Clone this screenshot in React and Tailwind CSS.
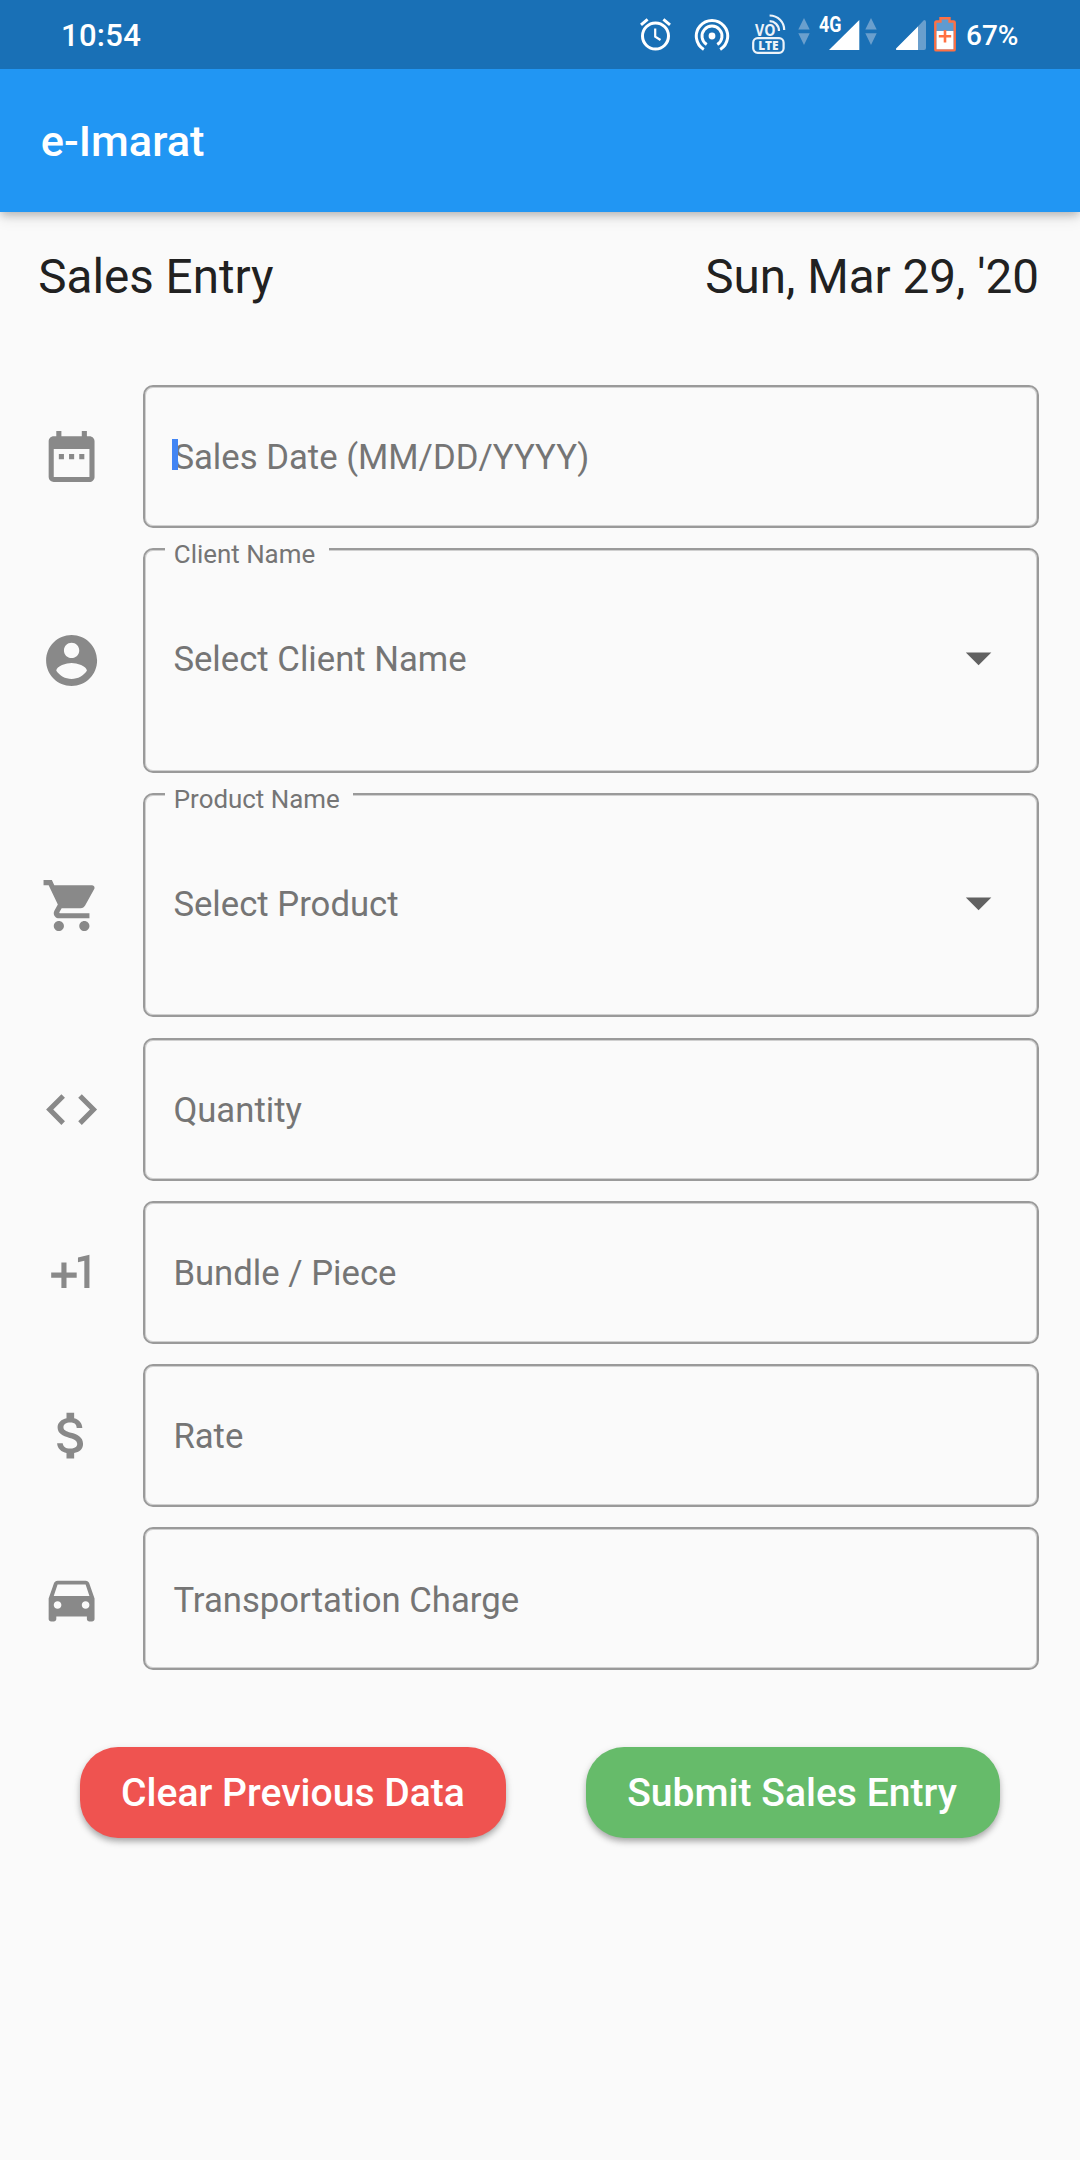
const ICONS = {
  date: "M9 11H7v2h2v-2zm4 0h-2v2h2v-2zm4 0h-2v2h2v-2zm2-7h-1V2h-2v2H8V2H6v2H5c-1.11 0-1.99.9-1.99 2L3 20a2 2 0 0 0 2 2h14c1.1 0 2-.9 2-2V6c0-1.1-.9-2-2-2zm0 16H5V9h14v11z",
  account: "M12 2C6.48 2 2 6.48 2 12s4.48 10 10 10 10-4.48 10-10S17.52 2 12 2zm0 3c1.66 0 3 1.34 3 3s-1.34 3-3 3-3-1.34-3-3 1.34-3 3-3zm0 14.2c-2.5 0-4.71-1.28-6-3.22.03-1.99 4-3.08 6-3.08 1.99 0 5.97 1.09 6 3.08-1.29 1.94-3.5 3.22-6 3.22z",
  cart: "M7 18c-1.1 0-1.99.9-1.99 2S5.9 22 7 22s2-.9 2-2-.9-2-2-2zM1 2v2h2l3.6 7.59-1.35 2.45c-.16.28-.25.61-.25.96 0 1.1.9 2 2 2h12v-2H7.42c-.14 0-.25-.11-.25-.25l.03-.12.9-1.63h7.45c.75 0 1.41-.41 1.75-1.03l3.58-6.49c.08-.14.12-.31.12-.48 0-.55-.45-1-1-1H5.21l-.94-2H1zm16 16c-1.1 0-1.99.9-1.99 2s.89 2 1.99 2 2-.9 2-2-.9-2-2-2z",
  code: "M9.4 16.6L4.8 12l4.6-4.6L8 6l-6 6 6 6 1.4-1.4zm5.2 0l4.6-4.6-4.6-4.6L16 6l6 6-6 6-1.4-1.4z",
  plusOne: "M10 8H8v4H4v2h4v4h2v-4h4v-2h-4zm4.5-1.92V7.9l2.5-.5V18h2V5z",
  money: "M11.8 10.9c-2.27-.59-3-1.2-3-2.15 0-1.09 1.01-1.85 2.7-1.85 1.78 0 2.44.85 2.5 2.1h2.21c-.07-1.72-1.12-3.3-3.21-3.81V3h-3v2.16c-1.94.42-3.5 1.68-3.5 3.61 0 2.31 1.91 3.46 4.7 4.13 2.5.6 3 1.48 3 2.41 0 .69-.49 1.79-2.7 1.79-2.06 0-2.87-.92-2.98-2.1h-2.2c.12 2.19 1.76 3.42 3.68 3.83V21h3v-2.15c1.95-.37 3.5-1.5 3.5-3.55 0-2.84-2.43-3.81-4.7-4.4z",
  car: "M18.92 6.01C18.72 5.42 18.16 5 17.5 5h-11c-.66 0-1.21.42-1.42 1.01L3 12v8c0 .55.45 1 1 1h1c.55 0 1-.45 1-1v-1h12v1c0 .55.45 1 1 1h1c.55 0 1-.45 1-1v-8l-2.08-5.99zM6.5 16c-.83 0-1.5-.67-1.5-1.5S5.67 13 6.5 13s1.5.67 1.5 1.5S7.33 16 6.5 16zm11 0c-.83 0-1.5-.67-1.5-1.5s.67-1.5 1.5-1.5 1.5.67 1.5 1.5-.67 1.5-1.5 1.5zM5 11l1.5-4.5h11L19 11H5z",
};

const FIELDS = [
  { icon: "date", text: "Sales Date (MM/DD/YYYY)", cursor: true },
  { icon: "account", text: "Select Client Name", label: "Client Name", labelWidth: "w-[164px]" },
  { icon: "cart", text: "Select Product", label: "Product Name", labelWidth: "w-[188px]" },
  { icon: "code", text: "Quantity" },
  { icon: "plusOne", text: "Bundle / Piece" },
  { icon: "money", text: "Rate" },
  { icon: "car", text: "Transportation Charge" },
];

function Icon({ d, className }) {
  return (
    <svg viewBox="0 0 24 24" className={`h-[61.2px] w-[61.2px] shrink-0 ${className}`} fill="currentColor">
      <path d={d} />
    </svg>
  );
}

function AlarmIcon() {
  return (
    <svg viewBox="0 0 31 33" className="h-[33px] w-[31px]" fill="none" stroke="#fff">
      <circle cx="15.5" cy="18" r="13" strokeWidth="3" />
      <path d="M15.2 10.5V18.6L20.5 22" strokeWidth="2.2" />
      <path d="M1 6.8L7.6 1.4M30 6.8L23.4 1.4" strokeWidth="3" />
    </svg>
  );
}

function HotspotIcon() {
  return (
    <svg viewBox="0 0 36 33" className="h-[33px] w-9" fill="none" stroke="#fff" strokeWidth="3">
      <circle cx="18" cy="18" r="3.4" fill="#fff" stroke="none" />
      <path d="M12.7 26.6A10 10 0 1 1 23.3 26.6" />
      <path d="M9.8 31.5A15.7 15.7 0 1 1 26.2 31.5" />
    </svg>
  );
}

function VolteIcon() {
  return (
    <svg viewBox="0 0 34 40" className="h-10 w-[34px] overflow-visible" fill="none" stroke="#edf3f9">
      <text x="3" y="22" fontSize="16.8" fontFamily="'Open Sans'" fontWeight="700" fill="#edf3f9" stroke="none" textLength="20.5" lengthAdjust="spacingAndGlyphs">VO</text>
      <path d="M17.6 7.2C22.5 7.2 27 11 27 17M17.6 1.5C26 1.5 32.2 8 32.2 16" strokeWidth="2.2" />
      <rect x="1.2" y="24.2" width="30.4" height="14.6" rx="4.5" strokeWidth="2.2" />
      <text x="6.2" y="36" fontSize="12.5" fontFamily="'Open Sans'" fontWeight="800" fill="#edf3f9" stroke="none" textLength="20.3" lengthAdjust="spacingAndGlyphs">LTE</text>
    </svg>
  );
}

function DataArrows() {
  return (
    <svg viewBox="0 0 12 27" className="h-[27px] w-3" fill="#6a9fcd">
      <path d="M6 0L11.7 11.5H.3zM6 27L.3 15.3H11.7z" />
    </svg>
  );
}

function BatteryIcon() {
  return (
    <svg viewBox="0 0 22 35" className="h-[35px] w-[22px]">
      <path d="M1.3 5.5a1 1 0 0 1 1-1H6.5V1.2h9V4.5h4.2a1 1 0 0 1 1 1V32.4a1 1 0 0 1-1 1H2.3a1 1 0 0 1-1-1z" fill="#5f9bd0" stroke="#ff7043" strokeWidth="2.4" />
      <path d="M2.6 14H19.4V32.2H2.6z" fill="#fff" />
      <path d="M11 13V25.4M4.8 19.2H17.2" stroke="#ff7043" strokeWidth="2.6" />
    </svg>
  );
}

function StatusBar() {
  return (
    <div className="relative z-10 flex h-[69px] items-start bg-[#1970b6] pl-[61px] font-medium text-white">
      <span className="mt-[18px] text-[31px] leading-[36px] tracking-[0.3px]">10:54</span>
      <div className="ml-auto flex items-start pr-[61px]">
        <div className="mt-[18px]"><AlarmIcon /></div>
        <div className="mt-[18px] ml-[23px]"><HotspotIcon /></div>
        <div className="mt-[14px] ml-[22px]"><VolteIcon /></div>
        <div className="mt-[17.5px] ml-3"><DataArrows /></div>
        <svg viewBox="0 0 42 36" className="mt-[15px] ml-2 h-9 w-[42px] overflow-visible">
          <path d="M41.3 5V35H11z" fill="#fff" />
          <text x="1" y="17.2" fontSize="22" fontFamily="Roboto" fontWeight="700" fill="#fff" textLength="22.5" lengthAdjust="spacingAndGlyphs">4G</text>
        </svg>
        <div className="mt-[17.5px] ml-[5px]"><DataArrows /></div>
        <svg viewBox="0 0 30 30" className="mt-5 ml-[19px] h-[30px] w-[30px]">
          <path d="M30 2a2 2 0 0 0-2-2L0 30H28a2 2 0 0 0 2-2z" fill="#6a9fcd" />
          <path d="M22 6.4V30H1A1 1 0 0 1 .3 28.3z" fill="#fff" />
        </svg>
        <div className="mt-[16.5px] ml-2"><BatteryIcon /></div>
        <span className="mt-[19px] ml-[10px] w-[53px] text-[28px] leading-[33px] whitespace-nowrap">67%</span>
      </div>
    </div>
  );
}

function Field({ icon, text, cursor, label, labelWidth }) {
  return (
    <div className="flex items-center gap-[40.8px]">
      <Icon d={ICONS[icon]} className="text-[#898989]" />
      <div
        className={`relative flex flex-1 items-center rounded-[10px] border-2 border-[#9a9a9a] pr-7 pl-[28.6px] text-[34.7px] leading-[42px] text-[#757575] shadow-[inset_0_0_0_1px_#d0d0d0] ${label ? "h-[224.4px] pb-[5px]" : "h-[142.8px]"}`}
      >
        {label && (
          <span className={`absolute -top-[14px] left-5 bg-[#fafafa] pl-[9px] text-[25.9px] leading-[37px] whitespace-nowrap ${labelWidth}`}>
            {label}
          </span>
        )}
        <span className={label ? "pt-[3px]" : "pt-[1.6px]"}>{text}</span>
        {cursor && <span className="absolute top-[52px] left-[27px] h-[31px] w-[6px] bg-[#4285f4]" />}
        {label && <Icon d="M7 10l5 5 5-5z" className="ml-auto text-[#616161]" />}
      </div>
    </div>
  );
}

const buttonBase =
  "h-[91.8px] rounded-[38px] pt-[2px] text-[39.1px] font-medium whitespace-nowrap text-white shadow-[0_4px_6px_-1px_rgba(0,0,0,0.26),0_3px_9px_0_rgba(0,0,0,0.13)]";

export default function App() {
  return (
    <div className="flex h-[2160px] w-[1080px] flex-col bg-[#fafafa] font-['Roboto',sans-serif]">
      <StatusBar />
      <header className="relative flex h-[142.6px] shrink-0 items-center bg-[#2196f3] pt-[3.4px] pl-[40.8px] shadow-[0_4px_8px_-1px_rgba(0,0,0,0.2),0_6px_14px_0_rgba(0,0,0,0.1)]">
        <h1 className="text-[43.35px] leading-[50px] font-medium text-white">e-Imarat</h1>
      </header>
      <div className="flex h-[173.45px] shrink-0 justify-between pt-[38px] pr-[41px] pl-[38.25px] text-[47.6px] leading-[55px] text-[#212121]">
        <span>Sales Entry</span>
        <span>Sun, Mar 29, '20</span>
      </div>
      <div className="flex flex-col gap-[20.4px] px-[40.8px]">
        {FIELDS.map((f) => (
          <Field key={f.icon} {...f} />
        ))}
      </div>
      <div className="mt-[76.5px] flex justify-between px-20">
        <button className={`${buttonBase} w-[426px] bg-[#ef5350]`}>Clear Previous Data</button>
        <button className={`${buttonBase} w-[414px] bg-[#66bb6a] pr-[2px]`}>Submit Sales Entry</button>
      </div>
    </div>
  );
}
